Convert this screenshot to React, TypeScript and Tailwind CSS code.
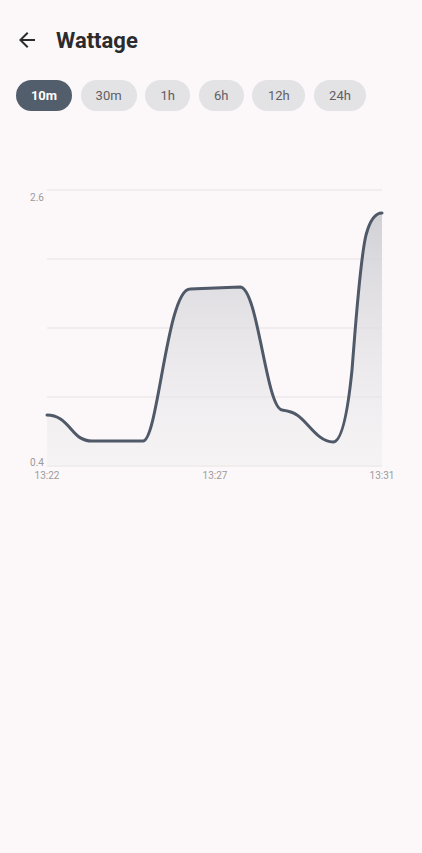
import { useMemo } from "react";

type RangeOption = { label: string; width: string };

const ranges: RangeOption[] = [
  { label: "10m", width: "w-[56px]" },
  { label: "30m", width: "w-[56px]" },
  { label: "1h", width: "w-[45px]" },
  { label: "6h", width: "w-[45px]" },
  { label: "12h", width: "w-[53px]" },
  { label: "24h", width: "w-[52px]" },
];

const gridYs = [190, 259, 328, 397, 466];

// hand-tuned smoothed series, in page pixel coords
const linePath =
  "M47,415 C58,415 64,421 71,429 C77,436 82,441 92,441 L143,441 " +
  "C158,441 167,289 190,289 L240,287 " +
  "C258,287 266,408 282,410 C289,411 293,412 297,415 " +
  "C308,422 318,442 333,442 C342,442 348,410 352,370 " +
  "C356,320 360,260 366,235 C370,220 375,213 382,213";

function BackIcon() {
  return (
    <svg width="24" height="24" viewBox="0 0 24 24" aria-hidden="true">
      <path
        fill="#2b2b2e"
        d="M20 11H7.83l5.59-5.59L12 4l-8 8 8 8 1.41-1.41L7.83 13H20v-2z"
      />
    </svg>
  );
}

function WattageChart() {
  const fillPath = useMemo(() => `${linePath} L382,466 L47,466 Z`, []);

  return (
    <svg
      width="422"
      height="310"
      viewBox="0 180 422 310"
      className="block"
      style={{ fontFamily: "Roboto, 'Liberation Sans', sans-serif" }}
    >
      <defs>
        <linearGradient id="wattFill" x1="0" y1="213" x2="0" y2="466" gradientUnits="userSpaceOnUse">
          <stop offset="0" stopColor="#cfcfd4" stopOpacity="0.95" />
          <stop offset="1" stopColor="#eeecef" stopOpacity="0.4" />
        </linearGradient>
      </defs>

      {gridYs.map((y) => (
        <line key={y} x1="47" x2="382" y1={y} y2={y} stroke="#e6e2e4" strokeWidth="1" />
      ))}

      <path d={fillPath} fill="url(#wattFill)" />
      <path d={linePath} fill="none" stroke="#4f5968" strokeWidth="3" strokeLinecap="round" strokeLinejoin="round" />

      <text x="44" y="200.5" textAnchor="end" fontSize="10" fill="#9b9a9c">2.6</text>
      <text x="44" y="466" textAnchor="end" fontSize="10" fill="#9b9a9c">0.4</text>
      <text x="47" y="479" textAnchor="middle" fontSize="10" fill="#9b9a9c">13:22</text>
      <text x="215" y="479" textAnchor="middle" fontSize="10" fill="#9b9a9c">13:27</text>
      <text x="382" y="479" textAnchor="middle" fontSize="10" fill="#9b9a9c">13:31</text>
    </svg>
  );
}

export default function App() {
  const selected = "10m";

  return (
    <div className="min-h-[853px] w-full bg-[#fcf8f9] font-['Roboto','Liberation_Sans',sans-serif]">
      <div className="flex h-20 items-center pl-[15px]">
        <button type="button" aria-label="Back" className="flex items-center">
          <BackIcon />
        </button>
        <h1 className="ml-[17px] text-[22px] font-bold text-[#2b2b2e]">Wattage</h1>
      </div>

      <div className="flex gap-[8.6px] pl-4">
        {ranges.map((r) => {
          const active = r.label === selected;
          return (
            <button
              key={r.label}
              type="button"
              className={
                active
                  ? `${r.width} flex h-[31px] items-center justify-center rounded-full bg-[#535e6c] text-[13px] font-bold text-white`
                  : `${r.width} flex h-[31px] items-center justify-center rounded-full bg-[#e3e2e5] text-[13px] text-[#5f5f62]`
              }
            >
              {r.label}
            </button>
          );
        })}
      </div>

      <div className="mt-[69px]">
        <WattageChart />
      </div>
    </div>
  );
}
